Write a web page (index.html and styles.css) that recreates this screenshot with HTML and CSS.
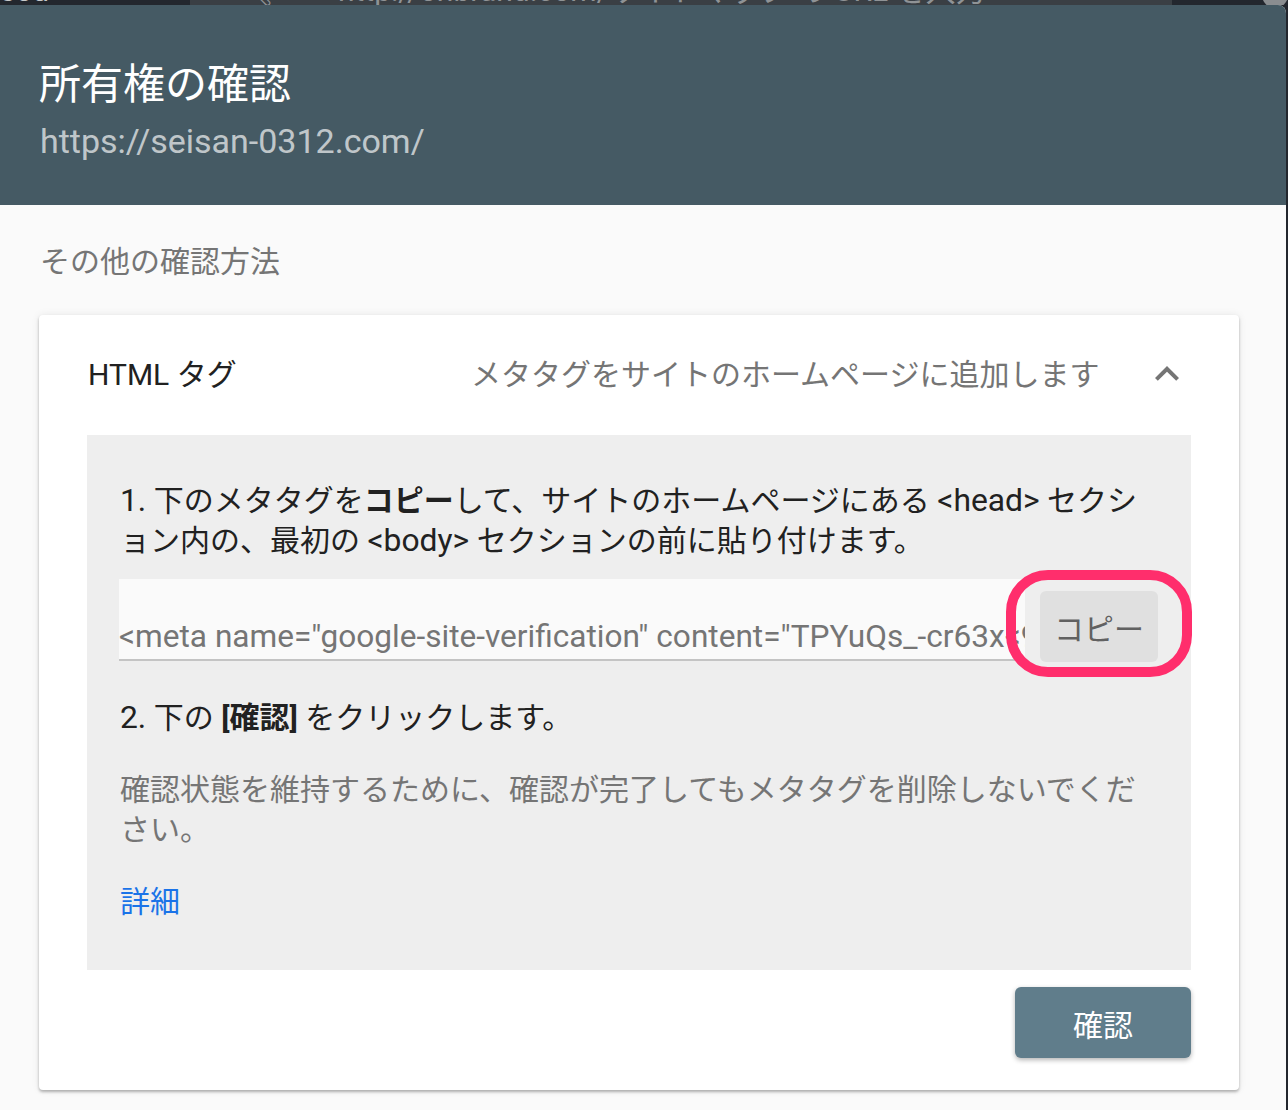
FILE: index.html
```html
<!DOCTYPE html>
<html lang="ja">
  <head>
    <meta charset="UTF-8">
    <meta name="viewport" content="width=device-width, initial-scale=1.0">
    <title>所有権の確認</title>
    <link rel="stylesheet" href="styles.css">
  </head>
  <body>
    <div class="chrome-strip">
      <div class="chrome-left"><span class="chrome-text">sou</span></div>
      <div class="chrome-bar">
        <span class="chrome-text chrome-search">&#x1F50D;&#xFE0E;</span>
        <span class="chrome-text chrome-url">http://onbrand.com/サイトマップ の URL を入力</span>
      </div>
      <div class="chrome-right"></div>
      <div class="chrome-dot"></div>
    </div>

    <div class="dialog">
      <div class="dialog-header">
        <div class="dialog-title">所有権の確認</div>
        <div class="dialog-url">https://seisan-0312.com/</div>
      </div>

      <div class="dialog-body">
        <div class="section-label">その他の確認方法</div>

        <div class="method-card">
          <div class="method-head">
            <div class="method-name">HTML タグ</div>
            <div class="method-desc">メタタグをサイトのホームページに追加します</div>
            <svg class="method-chevron" width="48" height="48" viewBox="0 0 24 24">
              <path d="M12 8l-6 6 1.41 1.41L12 10.83l4.59 4.58L18 14z" fill="#757575"/>
            </svg>
          </div>

          <div class="method-panel">
            <p class="step step-one"><span class="en">1.</span> 下のメタタグを<b>コピー</b>して、サイトのホームページにある <span class="en">&lt;head&gt;</span> セクション内の、最初の <span class="en">&lt;body&gt;</span> セクションの前に貼り付けます。</p>

            <div class="tag-row">
              <div class="tag-field">
                <span class="tag-text">&lt;meta name="google-site-verification" content="TPYuQs_-cr63x&lt;9bKq2mF8wXs0dLrT4vNp7hYc1eJgZ" /&gt;</span>
              </div>
              <button class="copy-button" type="button">コピー</button>
              <div class="highlight-ring"></div>
            </div>

            <p class="step step-two"><span class="en">2.</span> 下の <b>[確認]</b> をクリックします。</p>

            <p class="note">確認状態を維持するために、確認が完了してもメタタグを削除しないでください。</p>

            <a class="more-link" href="#">詳細</a>
          </div>

          <div class="card-actions">
            <button class="verify-button" type="button">確認</button>
          </div>
        </div>
      </div>
    </div>
  </body>
</html>
```

FILE: styles.css
```css
body {
  margin: 0;
  background-color: #23272e;
  font-family: Roboto, "Noto Sans CJK JP", sans-serif;
  overflow: hidden;
}

/* latin runs render a touch larger than the kana around them */
.en {
  font-size: 1.06em;
  line-height: 1;
}

/* browser chrome peeking above the dialog */
.chrome-strip {
  display: flex;
  height: 5px;
  overflow: hidden;
}

.chrome-left {
  width: 190px;
  background-color: #23272e;
}

.chrome-bar {
  display: flex;
  width: 982px;
  background-color: #3a3f44;
}

.chrome-right {
  width: 90px;
  background-color: #23272e;
}

.chrome-dot {
  width: 26px;
  height: 26px;
  margin-top: -18px;
  border-radius: 50%;
  background-color: #8a8d90;
}

.chrome-text {
  display: block;
  margin-top: -24px;
  font-size: 30px;
  line-height: 30px;
  color: #8f9396;
  white-space: nowrap;
}

.chrome-left .chrome-text {
  color: #c8cacc;
}

.chrome-search {
  margin-left: 46px;
  width: 100px;
}

.chrome-url {
  margin-left: 2px;
}

/* dialog */
.dialog {
  width: 1286px;
  height: 1105px;
  border-top-right-radius: 8px;
  overflow: hidden;
  background-color: #fafafa;
}

.dialog-header {
  box-sizing: border-box;
  height: 200px;
  padding: 56px 40px 0;
  background-color: #455a64;
}

.dialog-title {
  font-size: 42px;
  line-height: 48px;
  font-weight: 400;
  color: #fff;
  margin-left: -1px;
}

.dialog-url {
  margin-top: 12px;
  font-size: 34px;
  line-height: 40px;
  color: rgba(255, 255, 255, 0.68);
}

.dialog-body {
  padding: 37px 39px 0;
}

.section-label {
  font-size: 30px;
  line-height: 40px;
  color: #757575;
  padding-left: 1px;
}

.method-card {
  width: 1200px;
  margin-top: 33px;
  padding-bottom: 32px;
  background-color: #fff;
  border-radius: 4px;
  box-shadow: 0 2px 3px rgba(0, 0, 0, 0.28), 0 0 8px rgba(0, 0, 0, 0.08);
}

.method-head {
  display: flex;
  align-items: center;
  box-sizing: border-box;
  height: 120px;
  padding: 0 48px 6px 49px;
}

.method-name {
  width: 383px;
  font-size: 30px;
  color: #212121;
}

.method-desc {
  flex: 1;
  font-size: 30px;
  color: #757575;
}

.method-chevron {
  display: block;
  margin-top: 4px;
}

.method-panel {
  margin: 0 48px;
  padding: 46px 30px 48px 33px;
  background-color: #eeeeee;
}

.step {
  margin: 0;
  font-size: 30px;
  line-height: 40px;
  color: #212121;
  line-break: loose;
}

.step b {
  font-weight: 700;
}

.tag-row {
  position: relative;
  display: flex;
  align-items: flex-end;
  gap: 15px;
  margin: 18px 3px 0 0;
}

.tag-field {
  flex: 1;
  min-width: 0;
  box-sizing: border-box;
  height: 82px;
  margin-left: -1px;
  padding-top: 38px;
  overflow: hidden;
  background-color: #fafafa;
  border-bottom: 2px solid #c4c4c4;
}

.tag-text {
  font-size: 31.6px;
  line-height: 40px;
  color: #757575;
  white-space: nowrap;
}

.copy-button {
  width: 118px;
  height: 71px;
  margin-bottom: -1px;
  border: none;
  border-radius: 6px;
  background-color: #e0e0e0;
  color: #616161;
  font-family: Roboto, "Noto Sans CJK JP", sans-serif;
  font-size: 30px;
  padding: 0;
}

/* annotation drawn over the copy button */
.highlight-ring {
  position: absolute;
  left: 886px;
  right: -34px;
  top: -9px;
  bottom: -16px;
  border: 10px solid #ff2e6c;
  border-radius: 42px;
}

.step-two {
  margin-top: 37px;
}

.note {
  margin: 32px 0 0;
  font-size: 30px;
  line-height: 40px;
  color: #757575;
}

.more-link {
  display: block;
  margin-top: 32px;
  font-size: 30px;
  line-height: 40px;
  color: #1a73e8;
  text-decoration: none;
}

.card-actions {
  display: flex;
  justify-content: flex-end;
  padding: 17px 48px 0;
}

.verify-button {
  width: 176px;
  height: 71px;
  border: none;
  border-radius: 6px;
  background-color: #607d8b;
  color: #fff;
  font-family: Roboto, "Noto Sans CJK JP", sans-serif;
  font-size: 30px;
  box-shadow: 0 2px 5px rgba(0, 0, 0, 0.3);
}
```
